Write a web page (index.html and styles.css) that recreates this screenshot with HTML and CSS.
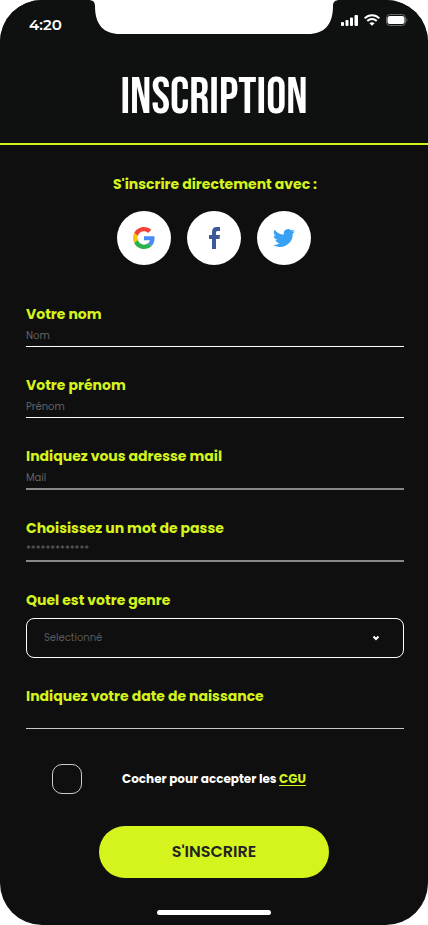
FILE: index.html
```html
<!DOCTYPE html>
<html lang="fr">
<head>
<meta charset="utf-8">
<meta name="viewport" content="width=device-width, initial-scale=1">
<title>Inscription</title>
<link rel="stylesheet" href="styles.css">
</head>
<body>
<div class="screen">
  <header class="header">
    <div class="status">
      <span class="time">4:20</span>
      <svg class="notch" width="252" height="35" viewBox="0 0 252 35" aria-hidden="true"><path fill="#fff" d="M0 0C5 0 7 2 7 6C7 25 16 34 32 34H220C236 34 245 25 245 6C245 2 247 0 252 0Z"/></svg>
      <div class="indicators">
        <svg width="18" height="12" viewBox="0 0 18 12" fill="#fff" aria-hidden="true"><rect x="1" y="8" width="3" height="4" rx="1"/><rect x="5.500" y="6" width="3" height="6" rx="1"/><rect x="10" y="3.500" width="3" height="8.500" rx="1"/><rect x="14.500" y="1" width="3.500" height="11" rx="1"/></svg>
        <svg width="16" height="12" viewBox="0 0 16 12" fill="none" stroke="#fff" stroke-width="2" aria-hidden="true"><path d="M.7 4.3C4.8.1 11.200.1 15.300 4.300M3.300 7C6 4.400 10 4.400 12.700 7"/><path fill="#fff" stroke="none" d="M5.400 9.200Q8 7.200 10.600 9.200L8 11.800Z"/></svg>
        <svg width="22" height="12" viewBox="0 0 22 12" aria-hidden="true"><rect x=".5" y=".5" width="19" height="11" rx="3.500" fill="none" stroke="#666"/><rect x="1.500" y="2" width="17" height="8" rx="2.500" fill="#fff"/><path d="M20.500 4v4q1-.5 1-2t-1-2" fill="#666"/></svg>
      </div>
    </div>
    <h1 class="title">INSCRIPTION</h1>
  </header>
  <main class="content">
    <p class="intro">S'inscrire directement avec :</p>
    <div class="socials">
      <button class="social" type="button" aria-label="Google"><svg width="22" height="22" viewBox="0 0 48 48" aria-hidden="true"><path fill="#f44336" d="M24 9.500c3.500 0 6.700 1.200 9.200 3.600l6.900-6.900C35.900 2.400 30.500 0 24 0 14.600 0 6.500 5.400 2.600 13.200l8 6.200C12.400 13.700 17.700 9.500 24 9.500z"/><path fill="#4a8af4" d="M47 24.500c0-1.600-.2-3.100-.4-4.500H24v9h12.900c-.6 3-2.300 5.500-4.800 7.200l7.700 6C44.400 38 47 31.800 47 24.500z"/><path fill="#ffc107" d="M10.500 28.600c-.5-1.500-.8-3-.8-4.600s.3-3.100.8-4.600l-8-6.200C.9 16.500 0 20.100 0 24s.9 7.500 2.600 10.800l7.900-6.200z"/><path fill="#2bb24c" d="M24 48c6.500 0 11.900-2.100 15.900-5.800l-7.700-6c-2.200 1.500-4.900 2.300-8.200 2.300-6.300 0-11.600-4.200-13.500-9.900l-8 6.200C6.500 42.600 14.600 48 24 48z"/></svg></button>
      <button class="social" type="button" aria-label="Facebook"><svg width="12" height="22" viewBox="0 0 12 22" aria-hidden="true"><path fill="#3d5a98" d="M4 22V12H1V8h3V5.200C4 1.800 5.700 0 8.700 0H12v4H10C8.500 4 8 4.600 8 5.700V8h4l-.5 4H8v10Z"/></svg></button>
      <button class="social" type="button" aria-label="Twitter"><svg width="22" height="20" viewBox="0 2 24 20" aria-hidden="true"><path fill="#38a1f3" d="M24 4.600a10 10 0 0 1-2.800.8 5 5 0 0 0 2.100-2.700 10 10 0 0 1-3.100 1.200 4.900 4.900 0 0 0-8.400 4.500A14 14 0 0 1 1.700 3.100a4.900 4.900 0 0 0 1.500 6.600 5 5 0 0 1-2.200-.6v.1a4.900 4.900 0 0 0 3.900 4.800 5 5 0 0 1-2.200.1 4.900 4.900 0 0 0 4.600 3.400A9.900 9.900 0 0 1 0 19.500a14 14 0 0 0 21.500-12.400A10 10 0 0 0 24 4.600z"/></svg></button>
    </div>
    <form class="form">
      <div class="field"><label for="nom">Votre nom</label><input class="line" id="nom" type="text" placeholder="Nom"></div>
      <div class="field"><label for="prenom">Votre prénom</label><input class="line" id="prenom" type="text" placeholder="Prénom"></div>
      <div class="field"><label for="mail">Indiquez vous adresse mail</label><input class="line line-soft" id="mail" type="email" placeholder="Mail"></div>
      <div class="field"><label for="pass">Choisissez un mot de passe</label><input class="line line-soft" id="pass" type="password" placeholder="*************"></div>
      <div class="field"><label for="genre">Quel est votre genre</label>
        <div class="select-wrap">
          <select id="genre"><option>Selectionné</option></select>
          <svg class="chevron" width="8" height="6" viewBox="0 0 8 6" aria-hidden="true"><path d="M1.500 1.500L4 4L6.500 1.500" fill="none" stroke="#fff" stroke-width="2"/></svg>
        </div>
      </div>
      <div class="field"><label for="date">Indiquez votre date de naissance</label><input class="line line-date" id="date" type="text"></div>
      <div class="terms"><input class="check" id="cgu" type="checkbox"><label for="cgu">Cocher pour accepter les <a href="#cgu">CGU</a></label></div>
      <button class="submit" type="submit">S'INSCRIRE</button>
    </form>
  </main>
  <div class="home-bar"></div>
</div>
</body>
</html>
```
FILE: styles.css
```css
* {
  box-sizing: border-box;
}

body {
  margin: 0;
  background: #fff;
  font-family: Poppins, Inter, "Open Sans", sans-serif;
}

.screen {
  min-height: 100vh;
  display: flex;
  flex-direction: column;
  background: #0f0f0f;
  border-radius: 42px;
  overflow: hidden;
}

.header {
  background: #0f1110;
  border-bottom: 2px solid #d5f31d;
  padding-bottom: 17px;
}

.status {
  position: relative;
  height: 50px;
  padding: 0 20px 0 29px;
  display: flex;
  align-items: center;
  justify-content: space-between;
}

.time {
  color: #fff;
  font: 600 15px/20px Montserrat, Inter, sans-serif;
}

.notch {
  position: absolute;
  top: 0;
  left: 50%;
  transform: translateX(-50%);
}

.indicators {
  display: flex;
  gap: 6px;
  padding-bottom: 10px;
}

.indicators svg {
  display: block;
}

.title {
  margin: 0;
  padding-top: 20px;
  color: #fff;
  text-align: center;
  font: 400 50px/56px "Bebas Neue", "Liberation Sans Narrow", "Liberation Sans", sans-serif;
}

.content {
  padding: 28px 24px 0 26px;
}

.intro,
.field label {
  margin: 0;
  color: #d5f31d;
  font-size: 14px;
  font-weight: 700;
  line-height: 22px;
}

.intro {
  text-align: center;
}

.socials {
  display: flex;
  justify-content: center;
  gap: 16px;
  margin: 16px 2px 38px 0;
}

.social {
  width: 54px;
  height: 54px;
  padding: 0;
  border: 0;
  border-radius: 50%;
  background: #fff;
  display: flex;
  align-items: center;
  justify-content: center;
}

.form {
  display: flex;
  flex-direction: column;
  gap: 27px;
}

.field {
  display: flex;
  flex-direction: column;
}

.line {
  width: 100%;
  height: 22px;
  padding: 0;
  border: 0;
  border-bottom: 1px solid #fff;
  border-radius: 0;
  background: transparent;
  color: #fff;
  font: 400 10px/20px Poppins, Inter, sans-serif;
  outline: 0;
}

.line::placeholder {
  color: #646464;
  opacity: 1;
}

.line-soft {
  height: 23px;
  border-bottom: 2px solid #888;
}

.line-date {
  border-color: #c8c8c8;
}

.select-wrap {
  position: relative;
  margin-top: 7px;
}

select {
  display: block;
  width: 100%;
  height: 40px;
  padding: 0 40px 0 17px;
  appearance: none;
  border: 1px solid #fff;
  border-radius: 8px;
  background: transparent;
  color: #5a5a5a;
  font: 400 10px/20px Poppins, Inter, sans-serif;
}

.chevron {
  position: absolute;
  right: 24px;
  top: 17px;
  pointer-events: none;
}

.terms {
  display: flex;
  align-items: center;
  gap: 40px;
  margin-top: 8px;
  padding-left: 26px;
}

.check {
  appearance: none;
  width: 30px;
  height: 30px;
  margin: 0;
  border: 1px solid #ccc;
  border-radius: 10px;
}

.terms label {
  color: #fff;
  font-size: 12px;
  font-weight: 700;
  line-height: 20px;
}

.terms a {
  color: #d5f31d;
  text-underline-offset: 2px;
}

.submit {
  align-self: center;
  width: 230px;
  height: 52px;
  margin: 5px 2px 0 0;
  border: 0;
  border-radius: 26px;
  background: #d5f31d;
  color: #222;
  font: 600 16px/24px Poppins, Inter, sans-serif;
}

.home-bar {
  width: 114px;
  height: 5px;
  margin: auto auto 10px;
  border-radius: 3px;
  background: #fff;
}
```
